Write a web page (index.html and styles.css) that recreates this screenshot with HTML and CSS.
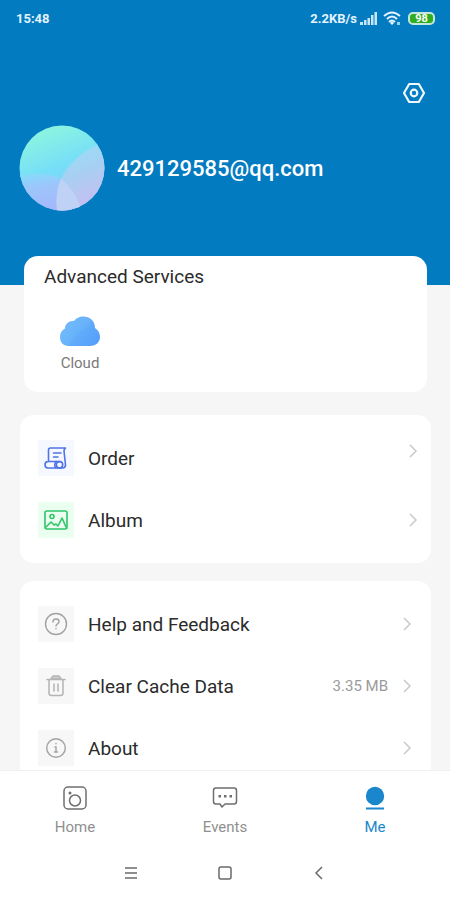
FILE: index.html
```html
<!DOCTYPE html>
<html lang="en">
<head>
<meta charset="UTF-8">
<meta name="viewport" content="width=device-width, initial-scale=1">
<title>Me</title>
<link rel="stylesheet" href="styles.css">
</head>
<body>
<div class="page">
    <main class="content">
        <header class="top">
            <div class="status">
                <span>15:48</span>
                <div class="status-right">
                    <span>2.2KB/s</span>
                    <svg class="signal" width="18" height="13" viewBox="0 0 18 13" fill="#c9e7fb">
                        <path d="M0 10h3v3H0zM4 8h2.500v5H4zM7.500 6H10v7H7.500zM11 3h2.500v10H11zM14.500 0H17v13h-2.500z"/>
                    </svg>
                    <svg class="wifi" width="18" height="15" viewBox="0 0 18 15" fill="none" stroke="#e4f3ff" stroke-width="2">
                        <path d="M1 5Q9 -2 17 5M4 8Q9 3 14 8M6 11Q9 8 12 11"/>
                        <path d="M9 10l2 2-2 2-2-2z" fill="#e4f3ff" stroke="none"/>
                        <path d="M14 11h3v3h-3z" fill="#8fd6f5" stroke="none"/>
                    </svg>
                    <span class="battery">98</span>
                </div>
            </div>
            <div class="tools">
                <button class="setting" type="button" aria-label="Settings">
                    <svg width="22" height="22" viewBox="0 0 22 22" fill="none" stroke="#f0f8ff" stroke-width="2.200" stroke-linejoin="round">
                        <path d="M6.200 2h9.600L21 11l-5.200 9H6.200L1 11z"/>
                        <circle cx="11" cy="11" r="3.300"/>
                    </svg>
                </button>
            </div>
            <div class="user">
                <svg class="avatar" width="86" height="86" viewBox="0 0 86 86">
                    <defs>
                        <linearGradient id="face" x1="0.200" y1="0" x2="0.600" y2="1">
                            <stop offset="0" stop-color="#90f8dc"/>
                            <stop offset="0.500" stop-color="#76dff7"/>
                            <stop offset="1" stop-color="#84c8f8"/>
                        </linearGradient>
                        <linearGradient id="left" x1="0" y1="0" x2="0.300" y2="1">
                            <stop offset="0" stop-color="#80e0fa"/>
                            <stop offset="0.400" stop-color="#9cc6fb"/>
                            <stop offset="1" stop-color="#a4b8fb"/>
                        </linearGradient>
                        <linearGradient id="right" x1="0.200" y1="0" x2="0.500" y2="1">
                            <stop offset="0" stop-color="#94e2f6"/>
                            <stop offset="0.500" stop-color="#a8cff2"/>
                            <stop offset="1" stop-color="#c8bdf0"/>
                        </linearGradient>
                        <clipPath id="round"><circle cx="43" cy="43" r="42.500"/></clipPath>
                    </defs>
                    <g clip-path="url(#round)">
                        <path d="M0 0h86v86H0z" fill="url(#face)"/>
                        <path d="M0 50Q26 45 42 54Q56 64 63 86H0z" fill="url(#left)"/>
                        <path d="M86 16Q57 28 44 50Q35 66 38 86h48z" fill="url(#right)"/>
                        <path d="M42 54Q56 64 63 86H38Q36 68 42 54z" fill="#bfd2f5"/>
                    </g>
                </svg>
                <span class="name">429129585@qq.com</span>
            </div>
        </header>

        <section class="services">
            <h2>Advanced Services</h2>
            <a class="service" href="#cloud">
                <svg width="40" height="30" viewBox="0 0 40 30">
                    <defs>
                        <linearGradient id="cloud" x1="0" y1="0.200" x2="1" y2="0.800">
                            <stop offset="0" stop-color="#70baf9"/>
                            <stop offset="1" stop-color="#559ffb"/>
                        </linearGradient>
                    </defs>
                    <path d="M9 30C3 30 0 26 0 21c0-4 2-7 5-8.500C5 8 9 4.500 14 5c3-4 8-5.500 13-4 5 1.500 8 5.500 8 11 3 2 5 5 5 9 0 5-4 9-10 9z" fill="url(#cloud)"/>
                    <path d="M14 5c3-4 8-5.500 13-4 2 .6 3.500 1.500 4.500 3C30 14 16 12 9 30 3 30 0 26 0 21c0-4 2-7 5-8.500C5 8 9 4.500 14 5z" fill="#7cc6ff" opacity="0.200"/>
                </svg>
                <span>Cloud</span>
            </a>
        </section>

        <nav class="list">
            <a class="row row-order" href="#order">
                <span class="icon blue">
                    <svg width="24" height="24" viewBox="0 0 24 24" fill="none" stroke="#4f74e8" stroke-width="1.600" stroke-linejoin="round" stroke-linecap="round">
                        <path d="M4.500 15.500V4q0-2 2-2h15q-1.500 1-1.500 3l1.500 14q0 3-3 3H4q-3 0-3-3.200t3-3.300h12"/>
                        <path d="M12 22q-2.500-3 0-6.500M9.500 7H17M9.500 11H14"/>
                        <circle cx="15.500" cy="18.800" r="3.200"/>
                    </svg>
                </span>
                <span class="label">Order</span>
                <svg class="arrow" width="10" height="22" viewBox="0 0 10 22"><path d="M1 5l6 6-6 6"/></svg>
            </a>
            <a class="row" href="#album">
                <span class="icon green">
                    <svg width="24" height="24" viewBox="0 0 24 24" fill="none" stroke="#2fc569" stroke-width="1.600" stroke-linejoin="round" stroke-linecap="round">
                        <rect x="1" y="3" width="22" height="18" rx="2"/>
                        <circle cx="8" cy="8.500" r="2"/>
                        <path d="M2 19l5-5 3 3 2-1 2 2 4-8 4 9"/>
                    </svg>
                </span>
                <span class="label">Album</span>
                <svg class="arrow" width="10" height="22" viewBox="0 0 10 22"><path d="M1 5l6 6-6 6"/></svg>
            </a>
        </nav>

        <nav class="list list-more">
            <a class="row" href="#help">
                <span class="icon">
                    <svg width="24" height="24" viewBox="0 0 24 24" fill="none" stroke="#a2a2a2" stroke-width="1.400" stroke-linecap="round">
                        <circle cx="12" cy="12" r="10.500"/>
                        <path d="M9 10q0-3 3-3t3 2.500q0 1.500-1.500 2.300T12 14M12 16.500v.3"/>
                    </svg>
                </span>
                <span class="label">Help and Feedback</span>
                <svg class="arrow" width="10" height="22" viewBox="0 0 10 22"><path d="M1 5l6 6-6 6"/></svg>
            </a>
            <a class="row" href="#cache">
                <span class="icon">
                    <svg width="24" height="24" viewBox="0 0 24 24" fill="none" stroke="#b4b4b4" stroke-width="1.500" stroke-linecap="round" stroke-linejoin="round">
                        <path d="M3 5.500h18M5 6v13q0 2.500 2.500 2.500h9q2.500 0 2.500-2.500V6M10 10v7M14 10v7"/>
                        <path d="M7 5l2-3h6l2 3z" fill="#cfcfcf"/>
                    </svg>
                </span>
                <span class="label">Clear Cache Data</span>
                <span class="size">3.35 MB</span>
                <svg class="arrow" width="10" height="22" viewBox="0 0 10 22"><path d="M1 5l6 6-6 6"/></svg>
            </a>
            <a class="row" href="#about">
                <span class="icon">
                    <svg width="24" height="24" viewBox="0 0 24 24" fill="none" stroke="#a2a2a2" stroke-width="1.400" stroke-linecap="round">
                        <circle cx="12" cy="12" r="9.300"/>
                        <path d="M12 7.500v.3M11 11h1v5M10.500 16h3"/>
                    </svg>
                </span>
                <span class="label">About</span>
                <svg class="arrow" width="10" height="22" viewBox="0 0 10 22"><path d="M1 5l6 6-6 6"/></svg>
            </a>
        </nav>
    </main>

    <footer class="bottom">
        <nav class="tabs">
            <a href="#home">
                <svg width="26" height="26" viewBox="0 0 26 26" fill="none" stroke="#6f6f6f" stroke-width="1.500">
                    <rect x="2" y="2" width="22" height="22" rx="4"/>
                    <circle cx="13" cy="15.500" r="5.500"/>
                    <circle cx="8" cy="8" r="1.500" fill="#6f6f6f" stroke="none"/>
                </svg>
                <span>Home</span>
            </a>
            <a href="#events">
                <svg width="26" height="26" viewBox="0 0 26 26" fill="none" stroke="#6f6f6f" stroke-width="1.500" stroke-linejoin="round">
                    <path d="M4 3h18q2.500 0 2.500 2.500v11Q24.500 19 22 19H13l-3 3-2-3H4q-2.500 0-2.500-2.500v-11Q1.500 3 4 3z"/>
                    <path d="M6.500 10H9v2.500H6.500zM12 10h2.500v2.500H12zM17.500 10H20v2.500h-2.500z" fill="#6f6f6f" stroke="none"/>
                </svg>
                <span>Events</span>
            </a>
            <a class="on" href="#me">
                <svg width="26" height="26" viewBox="0 0 26 26" fill="#1a86cc">
                    <circle cx="13" cy="11" r="9.200"/>
                    <rect x="4" y="22.500" width="18" height="2"/>
                </svg>
                <span>Me</span>
            </a>
        </nav>
        <div class="keys">
            <button type="button" aria-label="Menu">
                <svg width="14" height="14" viewBox="0 0 14 14"><path d="M1 2h12M1 7h12M1 12h12"/></svg>
            </button>
            <button type="button" aria-label="Home screen">
                <svg width="14" height="14" viewBox="0 0 14 14"><rect x="1" y="1" width="12" height="12" rx="2"/></svg>
            </button>
            <button type="button" aria-label="Back">
                <svg width="14" height="14" viewBox="0 0 14 14"><path d="M10 1L4 7l6 6"/></svg>
            </button>
        </div>
    </footer>
</div>
</body>
</html>
```
FILE: styles.css
```css
*{
    margin:0;
    padding:0;
    box-sizing:border-box;
}
body{
    font-family:Roboto,"Liberation Sans",sans-serif;
    color:#2b2b2b;
    background:#f6f6f6;
}
a{
    color:inherit;
    text-decoration:none;
}
button{
    border:none;
    background:none;
    cursor:pointer;
}
svg{
    display:block;
    flex:none;
}
.page{
    height:100vh;
    display:flex;
    flex-direction:column;
}
.content{
    flex:1;
    min-height:0;
    overflow-y:auto;
    scrollbar-width:none;
}
/*蓝色头部*/
.top{
    background:#027bc1;
    color:#fff;
    padding-bottom:74px;
}
.status{
    display:flex;
    justify-content:space-between;
    align-items:center;
    height:36px;
    padding:0 15px 0 16px;
    font-size:13px;
    font-weight:700;
    color:#e4f3ff;
}
.status-right{
    display:flex;
    align-items:center;
}
.signal{
    margin-left:3px;
}
.wifi{
    margin:0 7px 0 5px;
}
.battery{
    width:27px;
    height:13px;
    border:2px solid #c4e8dc;
    border-radius:5px;
    background:#2fae1f;
    color:#fff;
    font-size:11px;
    line-height:9px;
    text-align:center;
}
.tools{
    display:flex;
    justify-content:flex-end;
    padding:42px 21px 17px;
}
.setting{
    padding:4px;
}
.user{
    display:flex;
    align-items:center;
    padding:0 19px;
}
.name{
    margin-left:12px;
    font-size:22px;
    font-weight:500;
}
/*增值服务*/
.services{
    position:relative;
    margin:-29px 23px 23px 24px;
    padding:8px 20px 20px;
    border-radius:14px;
    background:#fff;
}
.services h2{
    font-size:19px;
    line-height:26px;
    font-weight:400;
}
.service{
    display:flex;
    flex-direction:column;
    align-items:center;
    width:72px;
    margin-top:26px;
    font-size:15px;
    line-height:18px;
    color:#7a7a7a;
}
.service span{
    margin-top:8px;
}
/*菜单列表*/
.list{
    margin:0 19px 18px 20px;
    padding:12px 12px 12px 18px;
    border-radius:14px;
    background:#fff;
}
.list-more{
    padding-right:18px;
}
.row{
    display:flex;
    align-items:center;
    padding:13px 0;
}
.row-order .arrow{
    align-self:flex-start;
}
.icon{
    display:flex;
    align-items:center;
    justify-content:center;
    width:36px;
    height:36px;
    background:#f7f7f7;
}
.blue{
    background:#f5f8ff;
}
.green{
    background:#ebfff1;
}
.label{
    flex:1;
    margin-left:14px;
    font-size:19px;
}
.size{
    margin-right:15px;
    font-size:15px;
    color:#9a9a9a;
}
.arrow{
    fill:none;
    stroke:#c9c9c9;
    stroke-width:1.5;
}
/*底部导航*/
.bottom{
    background:#fff;
    border-top:1px solid #f0f0f0;
}
.tabs{
    display:flex;
    padding-top:14px;
}
.tabs a{
    flex:1;
    display:flex;
    flex-direction:column;
    align-items:center;
    font-size:15px;
    line-height:18px;
    color:#8f8f8f;
}
.tabs span{
    margin-top:7px;
}
.tabs .on{
    color:#1a86cc;
}
.keys{
    display:flex;
    justify-content:center;
    gap:72px;
    padding:26px 0 16px;
}
.keys button{
    padding:4px;
}
.keys svg{
    fill:none;
    stroke:#6a6a6a;
    stroke-width:1.5;
}
```
